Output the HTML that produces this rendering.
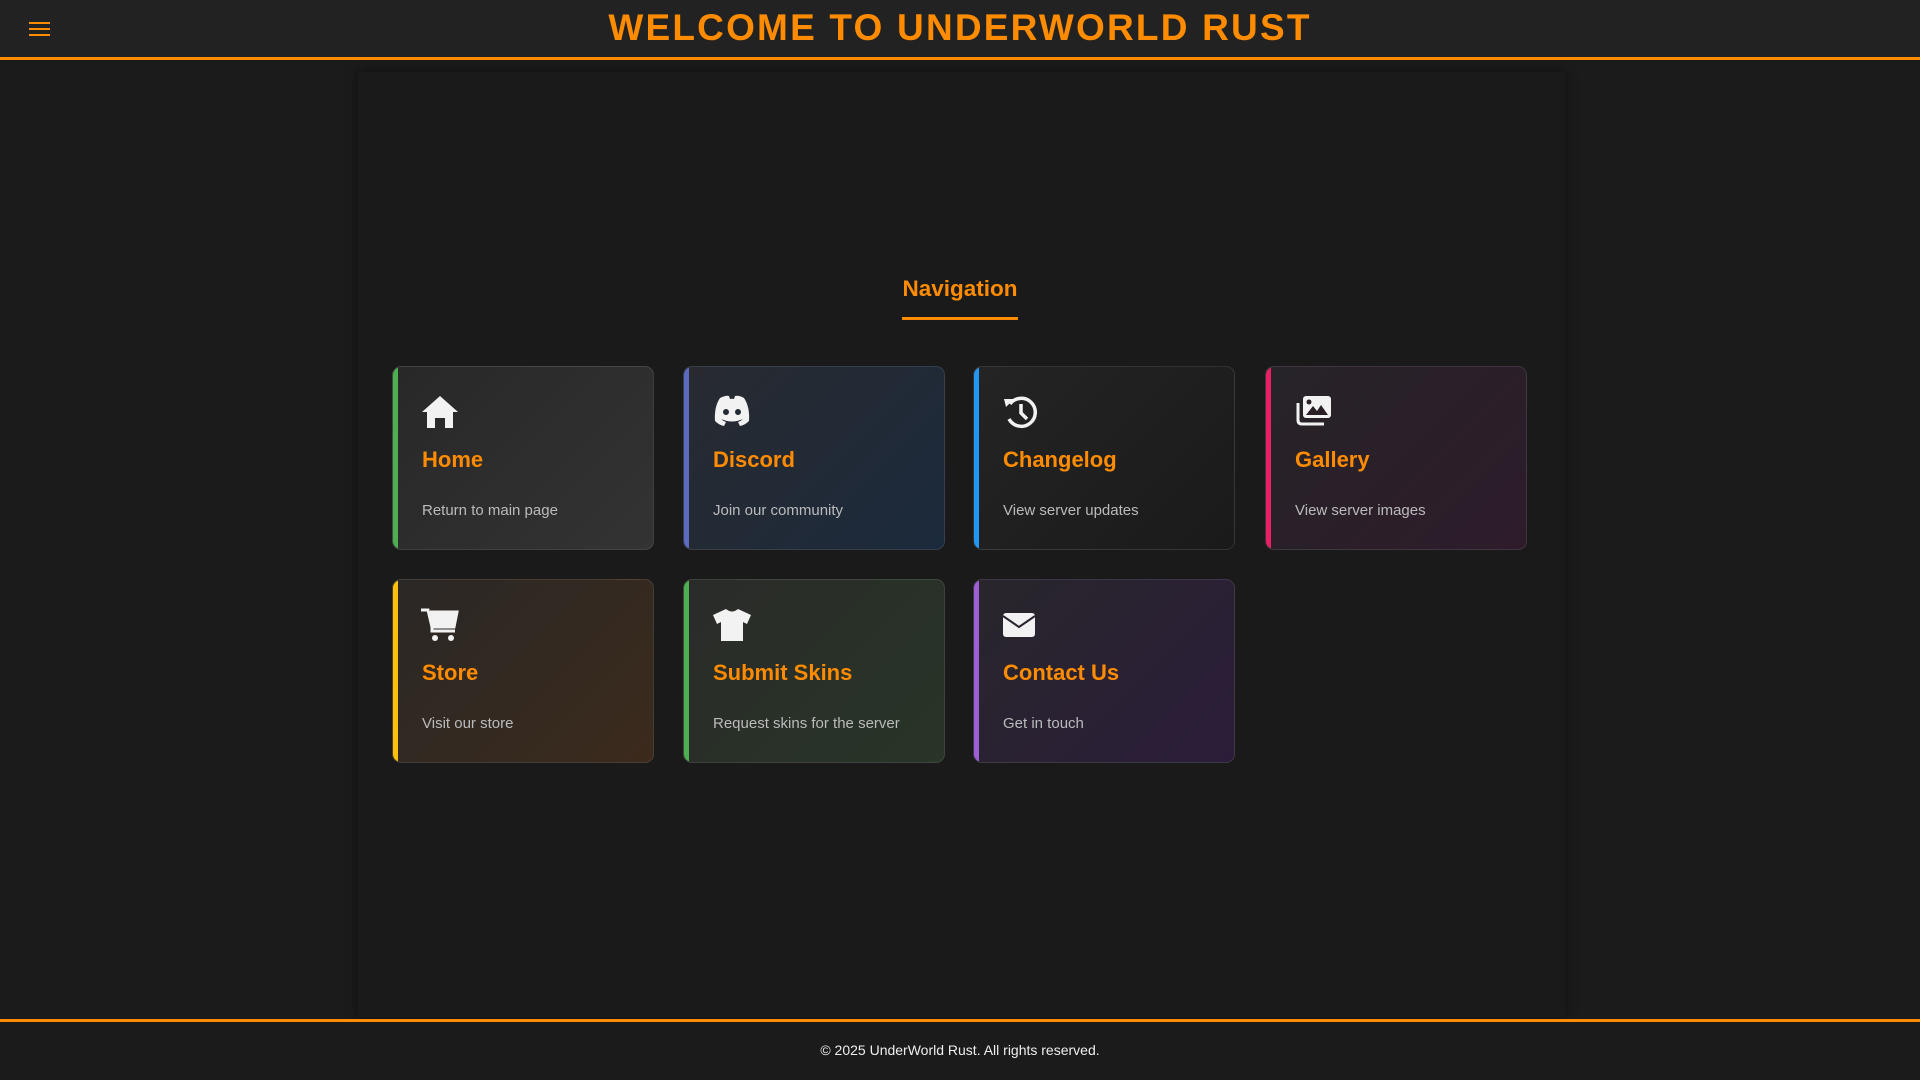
<!DOCTYPE html>
<html><head><meta charset="utf-8"><style>
*{margin:0;padding:0;box-sizing:border-box}
body{width:1920px;height:1080px;background:#1b1b1b;font-family:"Liberation Sans",sans-serif;overflow:hidden;position:relative}
header{position:absolute;left:0;top:0;width:1920px;height:60px;background:#222;border-bottom:3px solid #ff8c00}
.ham{position:absolute;left:29px;top:22px;width:21px}
.ham i{display:block;height:2px;background:#ff8c00;margin-bottom:4px}
h1{position:absolute;left:0;width:1920px;top:5px;text-align:center;color:#ff8c00;font-size:37px;font-weight:bold;letter-spacing:2.2px;line-height:46px}
.panel{position:absolute;left:358px;top:72px;width:1207px;height:945px;background:#1a1a1a;box-shadow:0 0 12px rgba(0,0,0,.45)}
.nav{position:absolute;left:897px;top:273px;width:126px;text-align:center;color:#ff8c00;font-size:22.5px;font-weight:bold;line-height:32px}
.ul{position:absolute;left:902px;top:317px;width:116px;height:3px;background:#ff8c00}
.card{position:absolute;width:262px;height:184px;border-radius:9px;border:1px solid rgba(255,255,255,.1);overflow:hidden}
.card .bar{position:absolute;left:0;top:0;bottom:0;width:5px}
.card svg{position:absolute;left:28px;top:27px}
.card h3{position:absolute;left:29px;top:80px;color:#ff8c00;font-size:22px;font-weight:bold}
.card p{position:absolute;left:29px;top:135px;color:#bbb;font-size:15px}
footer{position:absolute;left:0;top:1019px;width:1920px;height:61px;border-top:3px solid #ff8c00;background:#1b1b1b;color:#eee;font-size:14px;text-align:center;line-height:56px}
</style></head><body>
<header><div class="ham"><i></i><i></i><i></i></div><h1>WELCOME TO UNDERWORLD RUST</h1></header>
<div class="panel"></div>
<div class="nav">Navigation</div><div class="ul"></div>

<div class="card" style="left:392px;top:366px;background:linear-gradient(135deg,#282828,#333)"><div class="bar" style="background:#4caf50"></div>
<svg width="38" height="36" viewBox="0 0 38 36"><path d="M19 2 L37 18 H32 V34 H24 V24 H14 V34 H6 V18 H1 Z" fill="#f2f2f2"/></svg>
<h3>Home</h3><p>Return to main page</p></div>

<div class="card" style="left:683px;top:366px;background:linear-gradient(135deg,#282a30,#1b2a3c)"><div class="bar" style="background:#5c6bc0"></div>
<svg width="40" height="34" viewBox="0 0 40 34"><path d="M8 4 Q14 1 17 2 L18 5 Q20 4.6 22 5 L23 2 Q27 1 32 4 Q38 13 37 27 Q33 31 28 32 L26 28 Q29 27 31 25 Q20 30 9 25 Q11 27 14 28 L12 32 Q7 31 3 27 Q2 13 8 4Z" fill="#f2f2f2"/><circle cx="14" cy="18" r="3" fill="#222a36"/><circle cx="26" cy="18" r="3" fill="#222a36"/></svg>
<h3>Discord</h3><p>Join our community</p></div>

<div class="card" style="left:973px;top:366px;background:linear-gradient(135deg,#242424,#1a1a1a)"><div class="bar" style="background:#2196f3"></div>
<svg width="38" height="36" viewBox="0 0 38 36"><path d="M8 10 A14 14 0 1 1 7 25" fill="none" stroke="#f2f2f2" stroke-width="3.5"/><path d="M2 5 L12 5 L4 13Z" fill="#f2f2f2"/><path d="M19 10 V19 L25 25" fill="none" stroke="#f2f2f2" stroke-width="3.5"/></svg>
<h3>Changelog</h3><p>View server updates</p></div>

<div class="card" style="left:1265px;top:366px;background:linear-gradient(135deg,#262428,#2e1b2a)"><div class="bar" style="background:#e91e63"></div>
<svg width="40" height="34" viewBox="0 0 40 34"><rect x="9" y="2" width="28" height="22" rx="3" fill="#f2f2f2"/><path d="M4 9 V26 Q4 30 8 30 H30" fill="none" stroke="#f2f2f2" stroke-width="3"/><path d="M12 21 L19 12 L23 17 L27 11 L34 21Z" fill="#2a1e27"/><circle cx="15" cy="8" r="2.5" fill="#2a1e27"/></svg>
<h3>Gallery</h3><p>View server images</p></div>

<div class="card" style="left:392px;top:579px;background:linear-gradient(135deg,#2a2826,#3c2a1c)"><div class="bar" style="background:#ffc107"></div>
<svg width="40" height="36" viewBox="0 0 40 36"><path d="M0 3 H7 L11 20 H33 L36 5 H9" fill="none" stroke="#f2f2f2" stroke-width="3"/><path d="M9 5 H36 L33 21 H12Z" fill="#f2f2f2"/><path d="M11 20 V24 H34" fill="none" stroke="#f2f2f2" stroke-width="3"/><circle cx="14" cy="31" r="3" fill="#f2f2f2"/><circle cx="30" cy="31" r="3" fill="#f2f2f2"/></svg>
<h3>Store</h3><p>Visit our store</p></div>

<div class="card" style="left:683px;top:579px;background:linear-gradient(135deg,#2a2b29,#283527)"><div class="bar" style="background:#4caf50"></div>
<svg width="42" height="36" viewBox="0 0 42 36"><path d="M14 2 Q20 7 26 2 L39 8 L35 17 L31 15 V34 H9 V15 L5 17 L1 8Z" fill="#f2f2f2"/></svg>
<h3>Submit Skins</h3><p>Request skins for the server</p></div>

<div class="card" style="left:973px;top:579px;background:linear-gradient(135deg,#28262b,#2b1d3a)"><div class="bar" style="background:#9c5fd6"></div>
<svg width="36" height="36" viewBox="0 0 36 36"><rect x="1" y="6" width="32" height="24" rx="3" fill="#f2f2f2"/><path d="M1 9 L17 20 L33 9" fill="none" stroke="#2a2330" stroke-width="2"/></svg>
<h3>Contact Us</h3><p>Get in touch</p></div>

<footer>© 2025 UnderWorld Rust. All rights reserved.</footer>
</body></html>
